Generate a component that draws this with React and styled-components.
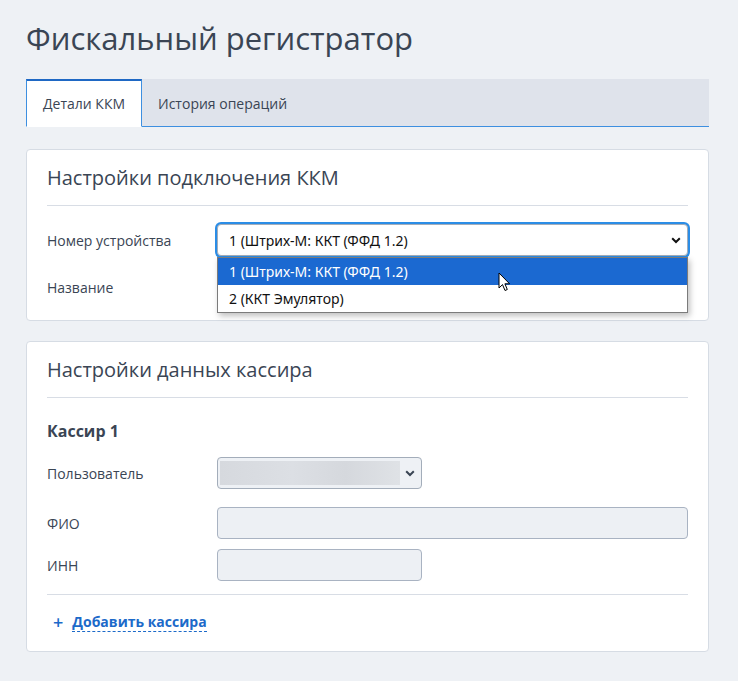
import styled, { createGlobalStyle } from "styled-components";

const GlobalStyle = createGlobalStyle`
  body {
    margin: 0;
    background: #eef1f5;
    font-family: "Open Sans", "Noto Sans", sans-serif;
    color: #3a4554;
  }
`;

const connectionRows = [
  { label: "Номер устройства", kind: "device" },
  { label: "Название", kind: "input" },
];

const deviceOptions = ["1 (Штрих-М: ККТ (ФФД 1.2)", "2 (ККТ Эмулятор)"];

const Chevron = ({ color = "#111" }) => (
  <svg width="10" height="7" viewBox="0 0 10 7">
    <path d="M1.2 1.3 L5 5 L8.8 1.3" fill="none" stroke={color} strokeWidth="2" />
  </svg>
);

const Cursor = () => (
  <svg width="13" height="20" viewBox="0 0 13 20">
    <path
      d="M1 1 L1 16 L4.5 12.6 L7 18.5 L9.3 17.5 L6.9 11.8 L11.6 11.8 Z"
      fill="#fff"
      stroke="#000"
      strokeWidth="1"
      strokeLinejoin="round"
    />
  </svg>
);

const App = () => {
  return (
    <Page>
      <GlobalStyle />
      <Title>Фискальный регистратор</Title>
      <Tabs>
        <Tab $active>Детали ККМ</Tab>
        <Tab>История операций</Tab>
        <TabFill />
      </Tabs>

      <Card>
        <CardTitle>Настройки подключения ККМ</CardTitle>
        <Divider />
        <Rows>
          {connectionRows.map((row) => (
            <Row key={row.label}>
              <Label>{row.label}</Label>
              {row.kind === "device" ? (
                <SelectWrap>
                  <FocusedSelect>
                    <span>{deviceOptions[0]}</span>
                    <Chevron />
                  </FocusedSelect>
                  <OptionList>
                    {deviceOptions.map((opt, i) => (
                      <Option key={opt} $selected={i === 0}>
                        {opt}
                      </Option>
                    ))}
                    <CursorSpot>
                      <Cursor />
                    </CursorSpot>
                  </OptionList>
                </SelectWrap>
              ) : (
                <TextInput $width="100%" />
              )}
            </Row>
          ))}
        </Rows>
      </Card>

      <Card>
        <CardTitle>Настройки данных кассира</CardTitle>
        <Divider />
        <CashierName>Кассир 1</CashierName>
        <CashierRows>
          <Row>
            <Label>Пользователь</Label>
            <UserSelect>
              <Blurred />
              <Chevron color="#3a4554" />
            </UserSelect>
          </Row>
          <Row>
            <Label>ФИО</Label>
            <TextInput $width="100%" $disabled />
          </Row>
          <Row>
            <Label>ИНН</Label>
            <TextInput $width="205px" $disabled />
          </Row>
        </CashierRows>
        <Divider />
        <AddLink>
          <Plus>+</Plus>
          <AddText>Добавить кассира</AddText>
        </AddLink>
      </Card>
    </Page>
  );
};

export default App;

const Page = styled.div`
  padding: 18px 29px 28px 26px;
`;

const Title = styled.h1`
  margin: 0;
  font-size: 31px;
  line-height: 40px;
  font-weight: 400;
  color: #3a4554;
`;

const Tabs = styled.div`
  display: flex;
  margin-top: 21px;
  height: 48px;
`;

const Tab = styled.div`
  display: flex;
  align-items: center;
  padding: 0 16px;
  font-size: 14px;
  color: #3a4554;
  background: ${(p) => (p.$active ? "#fff" : "#dfe3eb")};
  border-top: 2px solid ${(p) => (p.$active ? "#1f68c4" : "#dfe3eb")};
  border-left: ${(p) => (p.$active ? "1px solid #3d8fe0" : "none")};
  border-right: ${(p) => (p.$active ? "1px solid #3d8fe0" : "none")};
  border-bottom: 1px solid ${(p) => (p.$active ? "#fff" : "#3d8fe0")};
  box-sizing: border-box;
`;

const TabFill = styled.div`
  flex: 1;
  background: #dfe3eb;
  border-bottom: 1px solid #3d8fe0;
`;

const Card = styled.section`
  position: relative;
  margin-top: 22px;
  background: #fff;
  border: 1px solid #d6dce4;
  border-radius: 4px;
  padding: 14px 20px 17px 20px;
  & + & {
    margin-top: 20px;
  }
`;

const CardTitle = styled.h2`
  margin: 0;
  font-size: 20px;
  line-height: 28px;
  font-weight: 400;
  color: #3a4554;
`;

const Divider = styled.hr`
  margin: 13px 0 0 0;
  border: 0;
  border-top: 1px solid #d8dde5;
`;

const Rows = styled.div`
  display: flex;
  flex-direction: column;
  gap: 15px;
  margin-top: 18px;
`;

const CashierRows = styled.div`
  display: flex;
  flex-direction: column;
  gap: 10px;
  margin-top: 15px;
  margin-bottom: 11px;
  & > :first-child {
    margin-bottom: 8px;
  }
`;

const Row = styled.div`
  display: grid;
  grid-template-columns: 170px 1fr;
  align-items: center;
`;

const Label = styled.div`
  font-size: 14px;
  color: #3a4554;
`;

const SelectWrap = styled.div`
  position: relative;
`;

const FocusedSelect = styled.div`
  height: 32px;
  box-sizing: border-box;
  display: flex;
  align-items: center;
  justify-content: space-between;
  padding: 0 6px 0 11px;
  background: #fff;
  border: 1px solid #a3adba;
  border-radius: 4px;
  box-shadow: 0 0 0 2px #2b8de6;
  font-family: "Noto Sans", "Open Sans", sans-serif;
  font-size: 14px;
  color: #111;
`;

const OptionList = styled.div`
  position: absolute;
  left: 0;
  right: 0;
  top: 33px;
  z-index: 2;
  background: #fff;
  border: 1px solid #7b7b7b;
  box-shadow: 2px 3px 6px rgba(0, 0, 0, 0.25);
  font-family: "Noto Sans", "Open Sans", sans-serif;
  font-size: 14px;
`;

const Option = styled.div`
  height: 27px;
  display: flex;
  align-items: center;
  padding-left: 11px;
  background: ${(p) => (p.$selected ? "#1b69d1" : "#fff")};
  color: ${(p) => (p.$selected ? "#fff" : "#111")};
`;

const CursorSpot = styled.div`
  position: absolute;
  left: 280px;
  top: 14px;
  line-height: 0;
`;

const TextInput = styled.div`
  width: ${(p) => p.$width};
  height: 32px;
  box-sizing: border-box;
  border: 1px solid ${(p) => (p.$disabled ? "#a9b3c2" : "#a3adba")};
  border-radius: 4px;
  background: ${(p) => (p.$disabled ? "#edf0f4" : "#fff")};
`;

const UserSelect = styled.div`
  width: 205px;
  height: 32px;
  box-sizing: border-box;
  display: flex;
  align-items: center;
  justify-content: space-between;
  padding: 0 6px 0 2px;
  border: 1px solid #a3adba;
  border-radius: 4px;
  background: #eef1f5;
`;

const Blurred = styled.div`
  width: 180px;
  height: 24px;
  background: linear-gradient(90deg, #d6d9de 0%, #dcdfe4 40%, #d5d8dd 70%, #dfe2e6 100%);
`;

const CashierName = styled.div`
  margin-top: 22px;
  font-size: 16px;
  font-weight: 700;
  color: #3a4554;
`;

const AddLink = styled.div`
  display: flex;
  align-items: center;
  gap: 9px;
  margin: 17px 0 2px 6px;
  color: #1c6ac9;
`;

const Plus = styled.span`
  font-size: 18px;
  font-weight: 600;
  line-height: 20px;
`;

const AddText = styled.span`
  font-size: 14px;
  font-weight: 700;
  border-bottom: 1px dashed #1c6ac9;
  line-height: 18px;
`;
